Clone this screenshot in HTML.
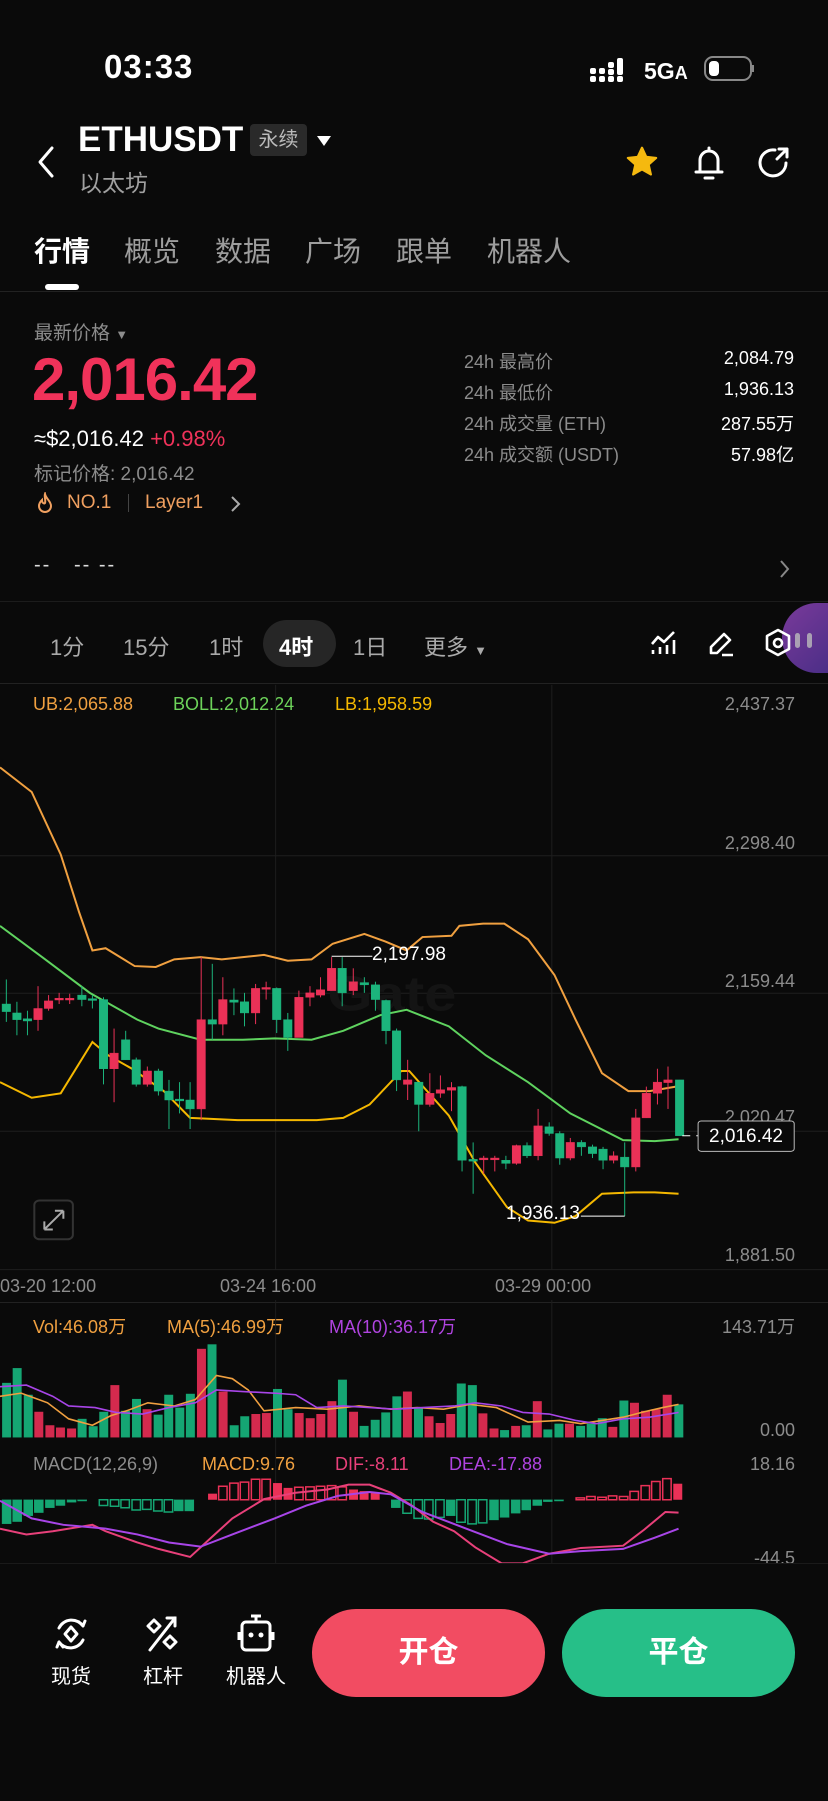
<!DOCTYPE html>
<html><head><meta charset="utf-8">
<style>
*{margin:0;padding:0;box-sizing:border-box}
body{width:828px;height:1801px;background:#0a0a0a;color:#fff;font-family:"Liberation Sans","Noto Sans CJK SC",sans-serif;position:relative;overflow:hidden}
.a{position:absolute;white-space:nowrap}
.g{color:#8c8c8c}
</style></head><body>
<div class="a" style="left:104px;top:48px;font-size:33px;font-weight:bold;letter-spacing:1px">03:33</div>
<svg class="a" style="left:588px;top:54px" width="170" height="30" viewBox="0 0 170 30">
<g fill="#fff"><rect x="2" y="14" width="6" height="6" rx="2"/><rect x="2" y="22" width="6" height="6" rx="2"/><rect x="11" y="14" width="6" height="6" rx="2"/><rect x="11" y="22" width="6" height="6" rx="2"/><rect x="20" y="8" width="6" height="6" rx="2"/><rect x="20" y="15" width="6" height="6" rx="2"/><rect x="20" y="22" width="6" height="6" rx="2"/><rect x="29" y="4" width="6" height="17" rx="2"/><rect x="29" y="22" width="6" height="6" rx="2"/></g>
<text x="56" y="25" font-size="23" fill="#fff" font-family="Liberation Sans" font-weight="bold">5G<tspan font-size="18">A</tspan></text>
<rect x="117" y="3" width="46" height="23" rx="8" fill="none" stroke="#888" stroke-width="2"/><rect x="121" y="7" width="10" height="15" rx="4" fill="#fff"/><rect x="164" y="11" width="2" height="7" fill="#888"/>
</svg>
<svg class="a" style="left:34px;top:145px" width="24" height="34"><path d="M18 3 L6 17 L18 31" stroke="#fff" stroke-width="3" fill="none" stroke-linecap="round" stroke-linejoin="round"/></svg>
<div class="a" style="left:78px;top:120px;font-size:35px;font-weight:bold">ETHUSDT</div>
<div class="a" style="left:250px;top:124px;width:57px;height:32px;background:#2a2a2a;border-radius:4px;color:#bbb;font-size:20px;line-height:32px;text-align:center">永续</div>
<svg class="a" style="left:315px;top:134px" width="18" height="14"><path d="M2 2 L16 2 L9 12Z" fill="#fff"/></svg>
<div class="a g" style="left:79px;top:164px;font-size:23px;color:#a0a0a0">以太坊</div>
<svg class="a" style="left:624px;top:144px" width="36" height="36" viewBox="0 0 24 24"><path d="M12 2.5 L14.8 8.6 L21.4 9.3 L16.4 13.7 L17.9 20.3 L12 16.9 L6.1 20.3 L7.6 13.7 L2.6 9.3 L9.2 8.6Z" fill="#f5b90f" stroke="#f5b90f" stroke-linejoin="round" stroke-width="1.5"/></svg>
<svg class="a" style="left:691px;top:143px" width="36" height="38" viewBox="0 0 36 38"><path d="M9 29 V17 a9 9 0 0 1 18 0 V29 M5 29 H31 M14 35 H22 M18 5 V8" stroke="#fff" stroke-width="3" fill="none" stroke-linecap="round"/></svg>
<svg class="a" style="left:756px;top:144px" width="36" height="36" viewBox="0 0 36 36"><path d="M30 19 A13 13 0 1 1 19 6 M21 15 L31 5 M23 5 H31 V13" stroke="#fff" stroke-width="3" fill="none" stroke-linecap="round" stroke-linejoin="round"/></svg>

<div class="a" style="left:34px;top:230px;font-size:28px;font-weight:bold">行情</div>
<div class="a" style="left:124px;top:230px;font-size:28px;color:#9d9d9d">概览</div>
<div class="a" style="left:215px;top:230px;font-size:28px;color:#9d9d9d">数据</div>
<div class="a" style="left:305px;top:230px;font-size:28px;color:#9d9d9d">广场</div>
<div class="a" style="left:396px;top:230px;font-size:28px;color:#9d9d9d">跟单</div>
<div class="a" style="left:487px;top:230px;font-size:28px;color:#9d9d9d">机器人</div>
<div class="a" style="left:45px;top:284px;width:34px;height:6px;background:#fff;border-radius:3px"></div>
<div class="a" style="left:0;top:291px;width:828px;height:1px;background:#222"></div>

<div class="a g" style="left:34px;top:318px;font-size:19px">最新价格 <span style="font-size:13px">▼</span></div>
<div class="a" style="left:32px;top:345px;font-size:60px;font-weight:bold;color:#f0325a;letter-spacing:-1px">2,016.42</div>
<div class="a" style="left:34px;top:426px;font-size:22px">≈$2,016.42 <span style="color:#f0325a">+0.98%</span></div>
<div class="a g" style="left:34px;top:459px;font-size:19px">标记价格: 2,016.42</div>
<svg class="a" style="left:36px;top:492px" width="18" height="22" viewBox="0 0 18 22"><path d="M9 2 C10 7 15 9 15 14 A6 6 0 0 1 3 14 C3 11 5 9 6 8 C6 11 8 12 9 11 C10 8 8 5 9 2Z" stroke="#f0a060" stroke-width="2" fill="none"/></svg>
<div class="a" style="left:67px;top:492px;font-size:19px;color:#f0a060">NO.1</div>
<div class="a" style="left:128px;top:494px;width:1px;height:18px;background:#444"></div>
<div class="a" style="left:145px;top:492px;font-size:19px;color:#f0a060">Layer1</div>
<svg class="a" style="left:229px;top:495px" width="12" height="18"><path d="M3 2 L10 9 L3 16" stroke="#aaa" stroke-width="2" fill="none"/></svg>

<div class="a g" style="left:464px;top:348px;font-size:18px">24h 最高价</div>
<div class="a g" style="left:464px;top:379px;font-size:18px">24h 最低价</div>
<div class="a g" style="left:464px;top:410px;font-size:18px">24h 成交量 (ETH)</div>
<div class="a g" style="left:464px;top:441px;font-size:18px">24h 成交额 (USDT)</div>
<div class="a" style="right:34px;top:348px;font-size:18px">2,084.79</div>
<div class="a" style="right:34px;top:379px;font-size:18px">1,936.13</div>
<div class="a" style="right:34px;top:410px;font-size:18px">287.55万</div>
<div class="a" style="right:34px;top:441px;font-size:18px">57.98亿</div>

<div class="a" style="left:34px;top:554px;font-size:20px;color:#ddd;letter-spacing:2px">--&nbsp;&nbsp;&nbsp;-- --</div>
<svg class="a" style="left:778px;top:559px" width="12" height="20"><path d="M3 2 L10 10 L3 18" stroke="#888" stroke-width="2" fill="none"/></svg>
<div class="a" style="left:0;top:601px;width:828px;height:1px;background:#1c1c1c"></div>

<div class="a" style="left:263px;top:620px;width:73px;height:47px;background:#262626;border-radius:24px"></div>
<div class="a" style="left:50px;top:630px;font-size:22px;color:#aaa">1分</div>
<div class="a" style="left:123px;top:630px;font-size:22px;color:#aaa">15分</div>
<div class="a" style="left:209px;top:630px;font-size:22px;color:#aaa">1时</div>
<div class="a" style="left:279px;top:630px;font-size:22px;font-weight:bold">4时</div>
<div class="a" style="left:353px;top:630px;font-size:22px;color:#aaa">1日</div>
<div class="a" style="left:424px;top:630px;font-size:22px;color:#aaa">更多 <span style="font-size:13px">▼</span></div>
<svg class="a" style="left:650px;top:630px" width="28" height="26" viewBox="0 0 28 26"><path d="M2 14 L8 7 L14 12 L24 2 M3 20 V24 M10 17 V24 M17 15 V24 M24 10 V24" stroke="#fff" stroke-width="2.6" fill="none" stroke-linejoin="round"/></svg>
<svg class="a" style="left:707px;top:629px" width="28" height="28" viewBox="0 0 28 28"><path d="M4 24 V18 L17 5 L23 11 L10 24Z M15 26 H26" stroke="#fff" stroke-width="2.6" fill="none" stroke-linejoin="round"/></svg>
<div class="a" style="left:782px;top:603px;width:90px;height:70px;border-radius:35px;background:linear-gradient(135deg,#7a3a9a,#3a2a80)"></div>
<svg class="a" style="left:765px;top:628px" width="60" height="30" viewBox="0 0 60 30"><path d="M13 2 L24 8 V21 L13 27 L2 21 V8Z" stroke="#fff" stroke-width="2.6" fill="none" stroke-linejoin="round"/><circle cx="13" cy="15" r="4" stroke="#fff" stroke-width="2.6" fill="none"/><rect x="30" y="5" width="5" height="15" rx="2.5" fill="#bbb" opacity=".8"/><rect x="42" y="5" width="5" height="15" rx="2.5" fill="#bbb" opacity=".8"/></svg>

<div class="a" style="left:0;top:683px;width:828px;height:1px;background:#222"></div>
<div class="a" style="left:33px;top:694px;font-size:18px;color:#f0a040">UB:2,065.88</div>
<div class="a" style="left:173px;top:694px;font-size:18px;color:#6dd35a">BOLL:2,012.24</div>
<div class="a" style="left:335px;top:694px;font-size:18px;color:#f5b800">LB:1,958.59</div>
<div class="a g" style="right:33px;top:694px;font-size:18px">2,437.37</div>
<div class="a g" style="right:33px;top:833px;font-size:18px">2,298.40</div>
<div class="a g" style="right:33px;top:971px;font-size:18px">2,159.44</div>
<div class="a g" style="right:33px;top:1107px;font-size:18px">2,020.47</div>
<div class="a g" style="right:33px;top:1245px;font-size:18px">1,881.50</div>

<svg class="a" style="left:0;top:600px" width="828" height="700" viewBox="0 0 1568 1568" preserveAspectRatio="none">
<g stroke="#1e1e1e" stroke-width="1" vector-effect="non-scaling-stroke">
<line x1="0" y1="573" x2="1568" y2="573" vector-effect="non-scaling-stroke"/><line x1="0" y1="881" x2="1568" y2="881" vector-effect="non-scaling-stroke"/><line x1="0" y1="1190" x2="1568" y2="1190" vector-effect="non-scaling-stroke"/><line x1="0" y1="1500" x2="1568" y2="1500" vector-effect="non-scaling-stroke"/>
<line x1="522" y1="190" x2="522" y2="1500" vector-effect="non-scaling-stroke"/><line x1="1045" y1="190" x2="1045" y2="1500" vector-effect="non-scaling-stroke"/>
</g>
<text x="620" y="920" font-size="110" font-weight="bold" fill="#141414" font-family="Liberation Sans">Gate</text>
<g fill="none" stroke-width="2" vector-effect="non-scaling-stroke">
<polyline vector-effect="non-scaling-stroke" stroke="#f0a040" points="0,375 60,430 115,570 150,700 175,785 200,780 255,820 295,822 330,805 380,800 420,805 460,800 500,795 545,808 590,805 630,770 690,748 730,765 770,785 800,755 855,752 870,730 915,725 955,725 1000,760 1050,840 1090,940 1140,1060 1190,1100 1230,1100 1280,1090"/>
<polyline vector-effect="non-scaling-stroke" stroke="#5fd35f" points="0,730 80,800 170,880 260,940 300,960 380,985 460,985 520,982 590,985 650,965 720,930 770,918 850,955 920,1020 1000,1080 1080,1150 1180,1210 1240,1212 1285,1208"/>
<polyline vector-effect="non-scaling-stroke" stroke="#f5b800" points="0,1080 60,1115 115,1105 175,990 205,1020 250,1050 310,1100 360,1160 450,1165 600,1165 650,1160 700,1130 760,1055 775,1055 850,1155 900,1260 960,1360 1000,1390 1050,1395 1090,1380 1140,1330 1200,1327 1240,1327 1285,1330"/>
</g>
<g id="c">
<g fill="#1cb47c" stroke="#1cb47c">
<line x1="12" y1="850" x2="12" y2="945" vector-effect="non-scaling-stroke"/><rect x="4" y="905" width="16" height="17"/>
<line x1="32" y1="900" x2="32" y2="975" vector-effect="non-scaling-stroke"/><rect x="24" y="925" width="16" height="15"/>
<line x1="52" y1="920" x2="52" y2="975" vector-effect="non-scaling-stroke"/><rect x="44" y="938" width="16" height="5"/>
<line x1="155" y1="865" x2="155" y2="910" vector-effect="non-scaling-stroke"/><rect x="147" y="885" width="16" height="10"/>
<line x1="175" y1="885" x2="175" y2="915" vector-effect="non-scaling-stroke"/><rect x="167" y="893" width="16" height="4"/>
<line x1="196" y1="890" x2="196" y2="1085" vector-effect="non-scaling-stroke"/><rect x="188" y="895" width="16" height="155"/>
<line x1="238" y1="965" x2="238" y2="1030" vector-effect="non-scaling-stroke"/><rect x="230" y="985" width="16" height="45"/>
<line x1="258" y1="1025" x2="258" y2="1090" vector-effect="non-scaling-stroke"/><rect x="250" y="1030" width="16" height="55"/>
<line x1="300" y1="1050" x2="300" y2="1110" vector-effect="non-scaling-stroke"/><rect x="292" y="1055" width="16" height="45"/>
<line x1="320" y1="1075" x2="320" y2="1185" vector-effect="non-scaling-stroke"/><rect x="312" y="1100" width="16" height="20"/>
<line x1="340" y1="1080" x2="340" y2="1150" vector-effect="non-scaling-stroke"/><rect x="332" y="1118" width="16" height="4"/>
<line x1="360" y1="1080" x2="360" y2="1185" vector-effect="non-scaling-stroke"/><rect x="352" y="1120" width="16" height="20"/>
<line x1="402" y1="815" x2="402" y2="985" vector-effect="non-scaling-stroke"/><rect x="394" y="940" width="16" height="10"/>
<line x1="443" y1="870" x2="443" y2="930" vector-effect="non-scaling-stroke"/><rect x="435" y="896" width="16" height="5"/>
<line x1="463" y1="880" x2="463" y2="955" vector-effect="non-scaling-stroke"/><rect x="455" y="900" width="16" height="25"/>
<line x1="524" y1="868" x2="524" y2="970" vector-effect="non-scaling-stroke"/><rect x="516" y="870" width="16" height="70"/>
<line x1="545" y1="925" x2="545" y2="1010" vector-effect="non-scaling-stroke"/><rect x="537" y="940" width="16" height="40"/>
<line x1="648" y1="800" x2="648" y2="910" vector-effect="non-scaling-stroke"/><rect x="640" y="825" width="16" height="55"/>
<line x1="690" y1="845" x2="690" y2="880" vector-effect="non-scaling-stroke"/><rect x="682" y="857" width="16" height="5"/>
<line x1="711" y1="855" x2="711" y2="920" vector-effect="non-scaling-stroke"/><rect x="703" y="862" width="16" height="33"/>
<line x1="731" y1="895" x2="731" y2="995" vector-effect="non-scaling-stroke"/><rect x="723" y="897" width="16" height="68"/>
<line x1="751" y1="960" x2="751" y2="1100" vector-effect="non-scaling-stroke"/><rect x="743" y="965" width="16" height="110"/>
<line x1="793" y1="1080" x2="793" y2="1190" vector-effect="non-scaling-stroke"/><rect x="785" y="1080" width="16" height="50"/>
<line x1="875" y1="1088" x2="875" y2="1280" vector-effect="non-scaling-stroke"/><rect x="867" y="1090" width="16" height="165"/>
<line x1="896" y1="1215" x2="896" y2="1330" vector-effect="non-scaling-stroke"/><rect x="888" y="1253" width="16" height="4"/>
<line x1="958" y1="1245" x2="958" y2="1275" vector-effect="non-scaling-stroke"/><rect x="950" y="1255" width="16" height="7"/>
<line x1="998" y1="1215" x2="998" y2="1250" vector-effect="non-scaling-stroke"/><rect x="990" y="1222" width="16" height="23"/>
<line x1="1040" y1="1170" x2="1040" y2="1200" vector-effect="non-scaling-stroke"/><rect x="1032" y="1180" width="16" height="15"/>
<line x1="1060" y1="1190" x2="1060" y2="1265" vector-effect="non-scaling-stroke"/><rect x="1052" y="1195" width="16" height="55"/>
<line x1="1101" y1="1210" x2="1101" y2="1245" vector-effect="non-scaling-stroke"/><rect x="1093" y="1215" width="16" height="10"/>
<line x1="1122" y1="1220" x2="1122" y2="1250" vector-effect="non-scaling-stroke"/><rect x="1114" y="1225" width="16" height="15"/>
<line x1="1142" y1="1225" x2="1142" y2="1275" vector-effect="non-scaling-stroke"/><rect x="1134" y="1230" width="16" height="25"/>
<line x1="1183" y1="1215" x2="1183" y2="1380" vector-effect="non-scaling-stroke"/><rect x="1175" y="1248" width="16" height="22"/>
<line x1="1287" y1="1075" x2="1287" y2="1200" vector-effect="non-scaling-stroke"/><rect x="1279" y="1075" width="16" height="125"/>
</g>
<g fill="#ea3157" stroke="#ea3157">
<line x1="72" y1="865" x2="72" y2="965" vector-effect="non-scaling-stroke"/><rect x="64" y="915" width="16" height="25"/>
<line x1="92" y1="885" x2="92" y2="920" vector-effect="non-scaling-stroke"/><rect x="84" y="898" width="16" height="17"/>
<line x1="112" y1="880" x2="112" y2="905" vector-effect="non-scaling-stroke"/><rect x="104" y="892" width="16" height="4"/>
<line x1="132" y1="882" x2="132" y2="905" vector-effect="non-scaling-stroke"/><rect x="124" y="892" width="16" height="4"/>
<line x1="216" y1="960" x2="216" y2="1125" vector-effect="non-scaling-stroke"/><rect x="208" y="1015" width="16" height="35"/>
<line x1="279" y1="1045" x2="279" y2="1090" vector-effect="non-scaling-stroke"/><rect x="271" y="1055" width="16" height="30"/>
<line x1="381" y1="800" x2="381" y2="1165" vector-effect="non-scaling-stroke"/><rect x="373" y="940" width="16" height="200"/>
<line x1="422" y1="845" x2="422" y2="975" vector-effect="non-scaling-stroke"/><rect x="414" y="895" width="16" height="55"/>
<line x1="484" y1="860" x2="484" y2="950" vector-effect="non-scaling-stroke"/><rect x="476" y="870" width="16" height="55"/>
<line x1="504" y1="855" x2="504" y2="895" vector-effect="non-scaling-stroke"/><rect x="496" y="868" width="16" height="4"/>
<line x1="566" y1="875" x2="566" y2="980" vector-effect="non-scaling-stroke"/><rect x="558" y="890" width="16" height="90"/>
<line x1="587" y1="865" x2="587" y2="910" vector-effect="non-scaling-stroke"/><rect x="579" y="880" width="16" height="10"/>
<line x1="607" y1="845" x2="607" y2="890" vector-effect="non-scaling-stroke"/><rect x="599" y="873" width="16" height="12"/>
<line x1="628" y1="800" x2="628" y2="875" vector-effect="non-scaling-stroke"/><rect x="620" y="825" width="16" height="50"/>
<line x1="669" y1="825" x2="669" y2="885" vector-effect="non-scaling-stroke"/><rect x="661" y="855" width="16" height="20"/>
<line x1="772" y1="1030" x2="772" y2="1120" vector-effect="non-scaling-stroke"/><rect x="764" y="1075" width="16" height="10"/>
<line x1="814" y1="1060" x2="814" y2="1135" vector-effect="non-scaling-stroke"/><rect x="806" y="1105" width="16" height="25"/>
<line x1="834" y1="1065" x2="834" y2="1115" vector-effect="non-scaling-stroke"/><rect x="826" y="1097" width="16" height="8"/>
<line x1="855" y1="1080" x2="855" y2="1145" vector-effect="non-scaling-stroke"/><rect x="847" y="1092" width="16" height="6"/>
<line x1="916" y1="1245" x2="916" y2="1285" vector-effect="non-scaling-stroke"/><rect x="908" y="1250" width="16" height="4"/>
<line x1="937" y1="1245" x2="937" y2="1280" vector-effect="non-scaling-stroke"/><rect x="929" y="1250" width="16" height="4"/>
<line x1="978" y1="1220" x2="978" y2="1265" vector-effect="non-scaling-stroke"/><rect x="970" y="1222" width="16" height="40"/>
<line x1="1019" y1="1140" x2="1019" y2="1255" vector-effect="non-scaling-stroke"/><rect x="1011" y="1178" width="16" height="67"/>
<line x1="1080" y1="1205" x2="1080" y2="1255" vector-effect="non-scaling-stroke"/><rect x="1072" y="1215" width="16" height="35"/>
<line x1="1162" y1="1235" x2="1162" y2="1262" vector-effect="non-scaling-stroke"/><rect x="1154" y="1245" width="16" height="10"/>
<line x1="1204" y1="1140" x2="1204" y2="1280" vector-effect="non-scaling-stroke"/><rect x="1196" y="1160" width="16" height="110"/>
<line x1="1224" y1="1090" x2="1224" y2="1160" vector-effect="non-scaling-stroke"/><rect x="1216" y="1105" width="16" height="55"/>
<line x1="1245" y1="1050" x2="1245" y2="1130" vector-effect="non-scaling-stroke"/><rect x="1237" y="1080" width="16" height="25"/>
<line x1="1265" y1="1045" x2="1265" y2="1140" vector-effect="non-scaling-stroke"/><rect x="1257" y="1075" width="16" height="6"/>
</g>
</g>
<g stroke="#fff" fill="none"><polyline vector-effect="non-scaling-stroke" points="628,798 705,798"/><polyline vector-effect="non-scaling-stroke" points="1100,1380 1183,1380"/><line x1="1292" y1="1200" x2="1322" y2="1200" stroke-dasharray="8 6" vector-effect="non-scaling-stroke"/>
<rect x="1322" y="1167" width="182" height="68" rx="6" fill="#0a0a0a" stroke="#bbb" vector-effect="non-scaling-stroke"/>
<rect x="65" y="1345" width="73" height="87" rx="10" stroke="#333" stroke-width="2" vector-effect="non-scaling-stroke"/>
<path d="M84 1410 L120 1368 M84 1410 V1392 M84 1410 H100 M120 1368 H104 M120 1368 V1386" stroke="#aaa" stroke-width="2" vector-effect="non-scaling-stroke"/></g>
</svg>
<div class="a" style="left:372px;top:944px;font-size:19px;color:#fff">2,197.98</div>
<div class="a" style="left:506px;top:1203px;font-size:19px;color:#fff">1,936.13</div>
<div class="a" style="left:709px;top:1126px;font-size:19px;color:#fff">2,016.42</div>
<div class="a g" style="left:0;top:1276px;font-size:18px">03-20 12:00</div>
<div class="a g" style="left:220px;top:1276px;font-size:18px">03-24 16:00</div>
<div class="a g" style="left:495px;top:1276px;font-size:18px">03-29 00:00</div>
<div class="a" style="left:0;top:1302px;width:828px;height:1px;background:#222"></div>

<div class="a" style="left:33px;top:1313px;font-size:18px;color:#f0a040">Vol:46.08万</div>
<div class="a" style="left:167px;top:1313px;font-size:18px;color:#f0a040">MA(5):46.99万</div>
<div class="a" style="left:329px;top:1313px;font-size:18px;color:#b044e0">MA(10):36.17万</div>
<div class="a g" style="right:33px;top:1313px;font-size:18px">143.71万</div>
<div class="a g" style="right:33px;top:1420px;font-size:18px">0.00</div>
<div class="a g" style="left:33px;top:1454px;font-size:18px">MACD(12,26,9)</div>
<div class="a" style="left:202px;top:1454px;font-size:18px;color:#f0a040">MACD:9.76</div>
<div class="a" style="left:335px;top:1454px;font-size:18px;color:#e8407a">DIF:-8.11</div>
<div class="a" style="left:449px;top:1454px;font-size:18px;color:#b044e0">DEA:-17.88</div>
<div class="a g" style="right:33px;top:1454px;font-size:18px">18.16</div>
<div class="a g" style="right:33px;top:1548px;font-size:18px;height:15px;overflow:hidden">-44.5</div>

<svg class="a" style="left:0;top:1300px" width="828" height="264" viewBox="0 0 1568 822" preserveAspectRatio="none">
<line x1="522" y1="0" x2="522" y2="822" stroke="#1e1e1e" vector-effect="non-scaling-stroke"/><line x1="1045" y1="0" x2="1045" y2="822" stroke="#1e1e1e" vector-effect="non-scaling-stroke"/>
<g fill="#15a673">
<rect x="4" y="258" width="17" height="170"/><rect x="24" y="212" width="17" height="216"/><rect x="45" y="295" width="17" height="133"/><rect x="147" y="370" width="17" height="58"/><rect x="168" y="393" width="17" height="35"/><rect x="188" y="348" width="17" height="80"/><rect x="229" y="345" width="17" height="83"/><rect x="250" y="308" width="17" height="120"/><rect x="291" y="357" width="17" height="71"/><rect x="311" y="295" width="17" height="133"/><rect x="332" y="335" width="17" height="93"/><rect x="352" y="292" width="17" height="136"/><rect x="393" y="138" width="17" height="290"/><rect x="435" y="390" width="17" height="38"/><rect x="455" y="362" width="17" height="66"/><rect x="517" y="277" width="17" height="151"/><rect x="537" y="340" width="17" height="88"/><rect x="640" y="248" width="17" height="180"/><rect x="681" y="392" width="17" height="36"/><rect x="702" y="373" width="17" height="55"/><rect x="722" y="350" width="17" height="78"/><rect x="743" y="300" width="17" height="128"/><rect x="784" y="337" width="17" height="91"/><rect x="865" y="260" width="17" height="168"/><rect x="886" y="265" width="17" height="163"/><rect x="947" y="405" width="17" height="23"/><rect x="988" y="390" width="17" height="38"/><rect x="1029" y="403" width="17" height="25"/><rect x="1050" y="385" width="17" height="43"/><rect x="1091" y="392" width="17" height="36"/><rect x="1111" y="385" width="17" height="43"/><rect x="1132" y="368" width="17" height="60"/><rect x="1173" y="313" width="17" height="115"/><rect x="1277" y="325" width="17" height="103"/>
</g>
<g fill="#d42a4e">
<rect x="65" y="348" width="17" height="80"/><rect x="86" y="390" width="17" height="38"/><rect x="106" y="397" width="17" height="31"/><rect x="127" y="400" width="17" height="28"/><rect x="209" y="265" width="17" height="163"/><rect x="270" y="340" width="17" height="88"/><rect x="373" y="152" width="17" height="276"/><rect x="414" y="285" width="17" height="143"/><rect x="476" y="355" width="17" height="73"/><rect x="496" y="352" width="17" height="76"/><rect x="558" y="352" width="17" height="76"/><rect x="579" y="368" width="17" height="60"/><rect x="599" y="355" width="17" height="73"/><rect x="620" y="315" width="17" height="113"/><rect x="661" y="348" width="17" height="80"/><rect x="763" y="285" width="17" height="143"/><rect x="804" y="362" width="17" height="66"/><rect x="825" y="383" width="17" height="45"/><rect x="845" y="355" width="17" height="73"/><rect x="906" y="353" width="17" height="75"/><rect x="927" y="400" width="17" height="28"/><rect x="968" y="392" width="17" height="36"/><rect x="1009" y="315" width="17" height="113"/><rect x="1070" y="385" width="17" height="43"/><rect x="1152" y="395" width="17" height="33"/><rect x="1193" y="320" width="17" height="108"/><rect x="1214" y="345" width="17" height="83"/><rect x="1234" y="340" width="17" height="88"/><rect x="1255" y="295" width="17" height="133"/>
</g>
<g fill="none" stroke-width="1.6">
<polyline vector-effect="non-scaling-stroke" stroke="#f0a040" points="0,300 40,290 90,320 130,370 175,390 210,360 240,345 280,320 330,330 370,310 410,235 440,245 470,280 500,345 560,335 620,340 680,330 740,340 790,335 840,340 890,325 940,335 980,365 1000,380 1060,375 1100,385 1140,375 1180,365 1220,348 1255,335 1285,325"/>
<polyline vector-effect="non-scaling-stroke" stroke="#a845e8" points="0,270 50,265 100,300 130,330 180,335 220,350 270,355 320,335 370,320 410,280 460,285 520,290 560,295 600,335 650,330 700,335 750,340 800,335 860,330 900,320 950,330 990,350 1040,355 1090,375 1130,385 1180,370 1230,365 1285,350"/>
</g>
<g fill="#15a673" stroke="#15a673">
<rect x="4" y="622" width="17" height="75"/><rect x="24" y="622" width="17" height="68"/><rect x="45" y="622" width="17" height="50"/><rect x="65" y="622" width="17" height="40"/><rect x="86" y="622" width="17" height="25"/><rect x="106" y="622" width="17" height="18"/><rect x="127" y="622" width="17" height="8"/><rect x="147" y="622" width="17" height="4"/>
<rect x="330" y="622" width="17" height="35"/><rect x="350" y="622" width="17" height="35"/>
<rect x="741" y="622" width="17" height="25"/><rect x="845" y="622" width="17" height="50"/><rect x="927" y="622" width="17" height="63"/><rect x="947" y="622" width="17" height="55"/><rect x="968" y="622" width="17" height="42"/><rect x="988" y="622" width="17" height="32"/><rect x="1009" y="622" width="17" height="18"/><rect x="1029" y="622" width="17" height="6"/><rect x="1050" y="622" width="17" height="4"/>
</g>
<g fill="none" stroke="#15a673" stroke-width="1.5">
<rect vector-effect="non-scaling-stroke" x="188" y="622" width="16" height="18"/><rect vector-effect="non-scaling-stroke" x="209" y="622" width="16" height="20"/><rect vector-effect="non-scaling-stroke" x="229" y="622" width="16" height="25"/><rect vector-effect="non-scaling-stroke" x="250" y="622" width="16" height="32"/><rect vector-effect="non-scaling-stroke" x="270" y="622" width="16" height="30"/><rect vector-effect="non-scaling-stroke" x="291" y="622" width="16" height="35"/><rect vector-effect="non-scaling-stroke" x="311" y="622" width="16" height="38"/>
<rect vector-effect="non-scaling-stroke" x="763" y="622" width="16" height="42"/><rect vector-effect="non-scaling-stroke" x="784" y="622" width="16" height="58"/><rect vector-effect="non-scaling-stroke" x="804" y="622" width="16" height="60"/><rect vector-effect="non-scaling-stroke" x="825" y="622" width="16" height="55"/><rect vector-effect="non-scaling-stroke" x="865" y="622" width="16" height="70"/><rect vector-effect="non-scaling-stroke" x="886" y="622" width="16" height="75"/><rect vector-effect="non-scaling-stroke" x="906" y="622" width="16" height="72"/>
</g>
<g fill="#ea3157">
<rect x="394" y="603" width="17" height="19"/><rect x="517" y="570" width="17" height="52"/><rect x="537" y="585" width="17" height="37"/><rect x="661" y="590" width="17" height="32"/><rect x="681" y="595" width="17" height="27"/><rect x="702" y="600" width="17" height="22"/><rect x="1275" y="572" width="17" height="50"/>
</g>
<g fill="none" stroke="#ea3157" stroke-width="1.5">
<rect vector-effect="non-scaling-stroke" x="414" y="580" width="16" height="42"/><rect vector-effect="non-scaling-stroke" x="435" y="570" width="16" height="52"/><rect vector-effect="non-scaling-stroke" x="455" y="567" width="16" height="55"/><rect vector-effect="non-scaling-stroke" x="476" y="558" width="16" height="64"/><rect vector-effect="non-scaling-stroke" x="496" y="558" width="16" height="64"/>
<rect vector-effect="non-scaling-stroke" x="558" y="583" width="16" height="39"/><rect vector-effect="non-scaling-stroke" x="579" y="582" width="16" height="40"/><rect vector-effect="non-scaling-stroke" x="599" y="580" width="16" height="42"/><rect vector-effect="non-scaling-stroke" x="620" y="578" width="16" height="44"/><rect vector-effect="non-scaling-stroke" x="640" y="582" width="16" height="40"/>
<rect vector-effect="non-scaling-stroke" x="1091" y="616" width="16" height="6"/><rect vector-effect="non-scaling-stroke" x="1111" y="612" width="16" height="10"/><rect vector-effect="non-scaling-stroke" x="1132" y="614" width="16" height="8"/><rect vector-effect="non-scaling-stroke" x="1152" y="610" width="16" height="12"/><rect vector-effect="non-scaling-stroke" x="1173" y="612" width="16" height="10"/><rect vector-effect="non-scaling-stroke" x="1193" y="596" width="16" height="26"/><rect vector-effect="non-scaling-stroke" x="1214" y="578" width="16" height="44"/><rect vector-effect="non-scaling-stroke" x="1234" y="565" width="16" height="57"/><rect vector-effect="non-scaling-stroke" x="1255" y="556" width="16" height="66"/>
</g>
<g fill="none" stroke-width="2">
<polyline vector-effect="non-scaling-stroke" stroke="#e8407a" points="0,712 50,730 100,720 175,700 200,720 260,755 300,775 360,800 400,740 440,680 500,620 560,600 620,590 660,575 700,575 740,600 780,640 820,690 860,720 900,770 950,820 990,820 1040,790 1100,772 1180,765 1220,715 1260,660 1285,662"/>
<polyline vector-effect="non-scaling-stroke" stroke="#a845e8" points="0,625 60,680 120,700 200,712 260,730 320,755 380,768 440,730 520,680 580,640 640,610 700,598 740,605 800,660 880,710 960,760 1040,790 1100,782 1180,775 1240,740 1285,712"/>
</g>
</svg>
<div class="a" style="left:0;top:1563px;width:828px;height:1px;background:#1a1a1a"></div>

<svg class="a" style="left:52px;top:1614px" width="38" height="40" viewBox="0 0 38 40"><path d="M7 14 A14 14 0 0 1 31 12 M31 26 A14 14 0 0 1 7 28 M27 8 L31 12 L33 7 M11 33 L7 28 L5 33" stroke="#fff" stroke-width="3" fill="none" stroke-linecap="round" stroke-linejoin="round"/><path d="M19 13 L25 20 L19 27 L13 20Z" stroke="#fff" stroke-width="3" fill="none" stroke-linejoin="round"/></svg>
<div class="a" style="left:51px;top:1660px;font-size:20px">现货</div>
<svg class="a" style="left:145px;top:1614px" width="36" height="40" viewBox="0 0 36 40"><path d="M5 36 L30 4 M22 4 H30 V12" stroke="#fff" stroke-width="3" fill="none" stroke-linecap="round"/><path d="M9 6 L15 12 L9 18 L3 12Z M25 22 L31 28 L25 34 L19 28Z" stroke="#fff" stroke-width="3" fill="none" stroke-linejoin="round"/></svg>
<div class="a" style="left:143px;top:1660px;font-size:20px">杠杆</div>
<svg class="a" style="left:237px;top:1612px" width="38" height="42" viewBox="0 0 38 42"><rect x="5" y="10" width="28" height="28" rx="4" stroke="#fff" stroke-width="3" fill="none"/><path d="M19 10 V4 M14 4 H24 M2 20 V28 M36 20 V28" stroke="#fff" stroke-width="3"/><circle cx="14" cy="23" r="2.5" fill="#fff"/><circle cx="24" cy="23" r="2.5" fill="#fff"/></svg>
<div class="a" style="left:226px;top:1660px;font-size:20px">机器人</div>
<div class="a" style="left:312px;top:1609px;width:233px;height:88px;border-radius:44px;background:#f24c62;font-size:30px;font-weight:bold;line-height:88px;text-align:center">开仓</div>
<div class="a" style="left:562px;top:1609px;width:233px;height:88px;border-radius:44px;background:#26bf88;font-size:30px;font-weight:bold;line-height:88px;text-align:center">平仓</div>
</body></html>
